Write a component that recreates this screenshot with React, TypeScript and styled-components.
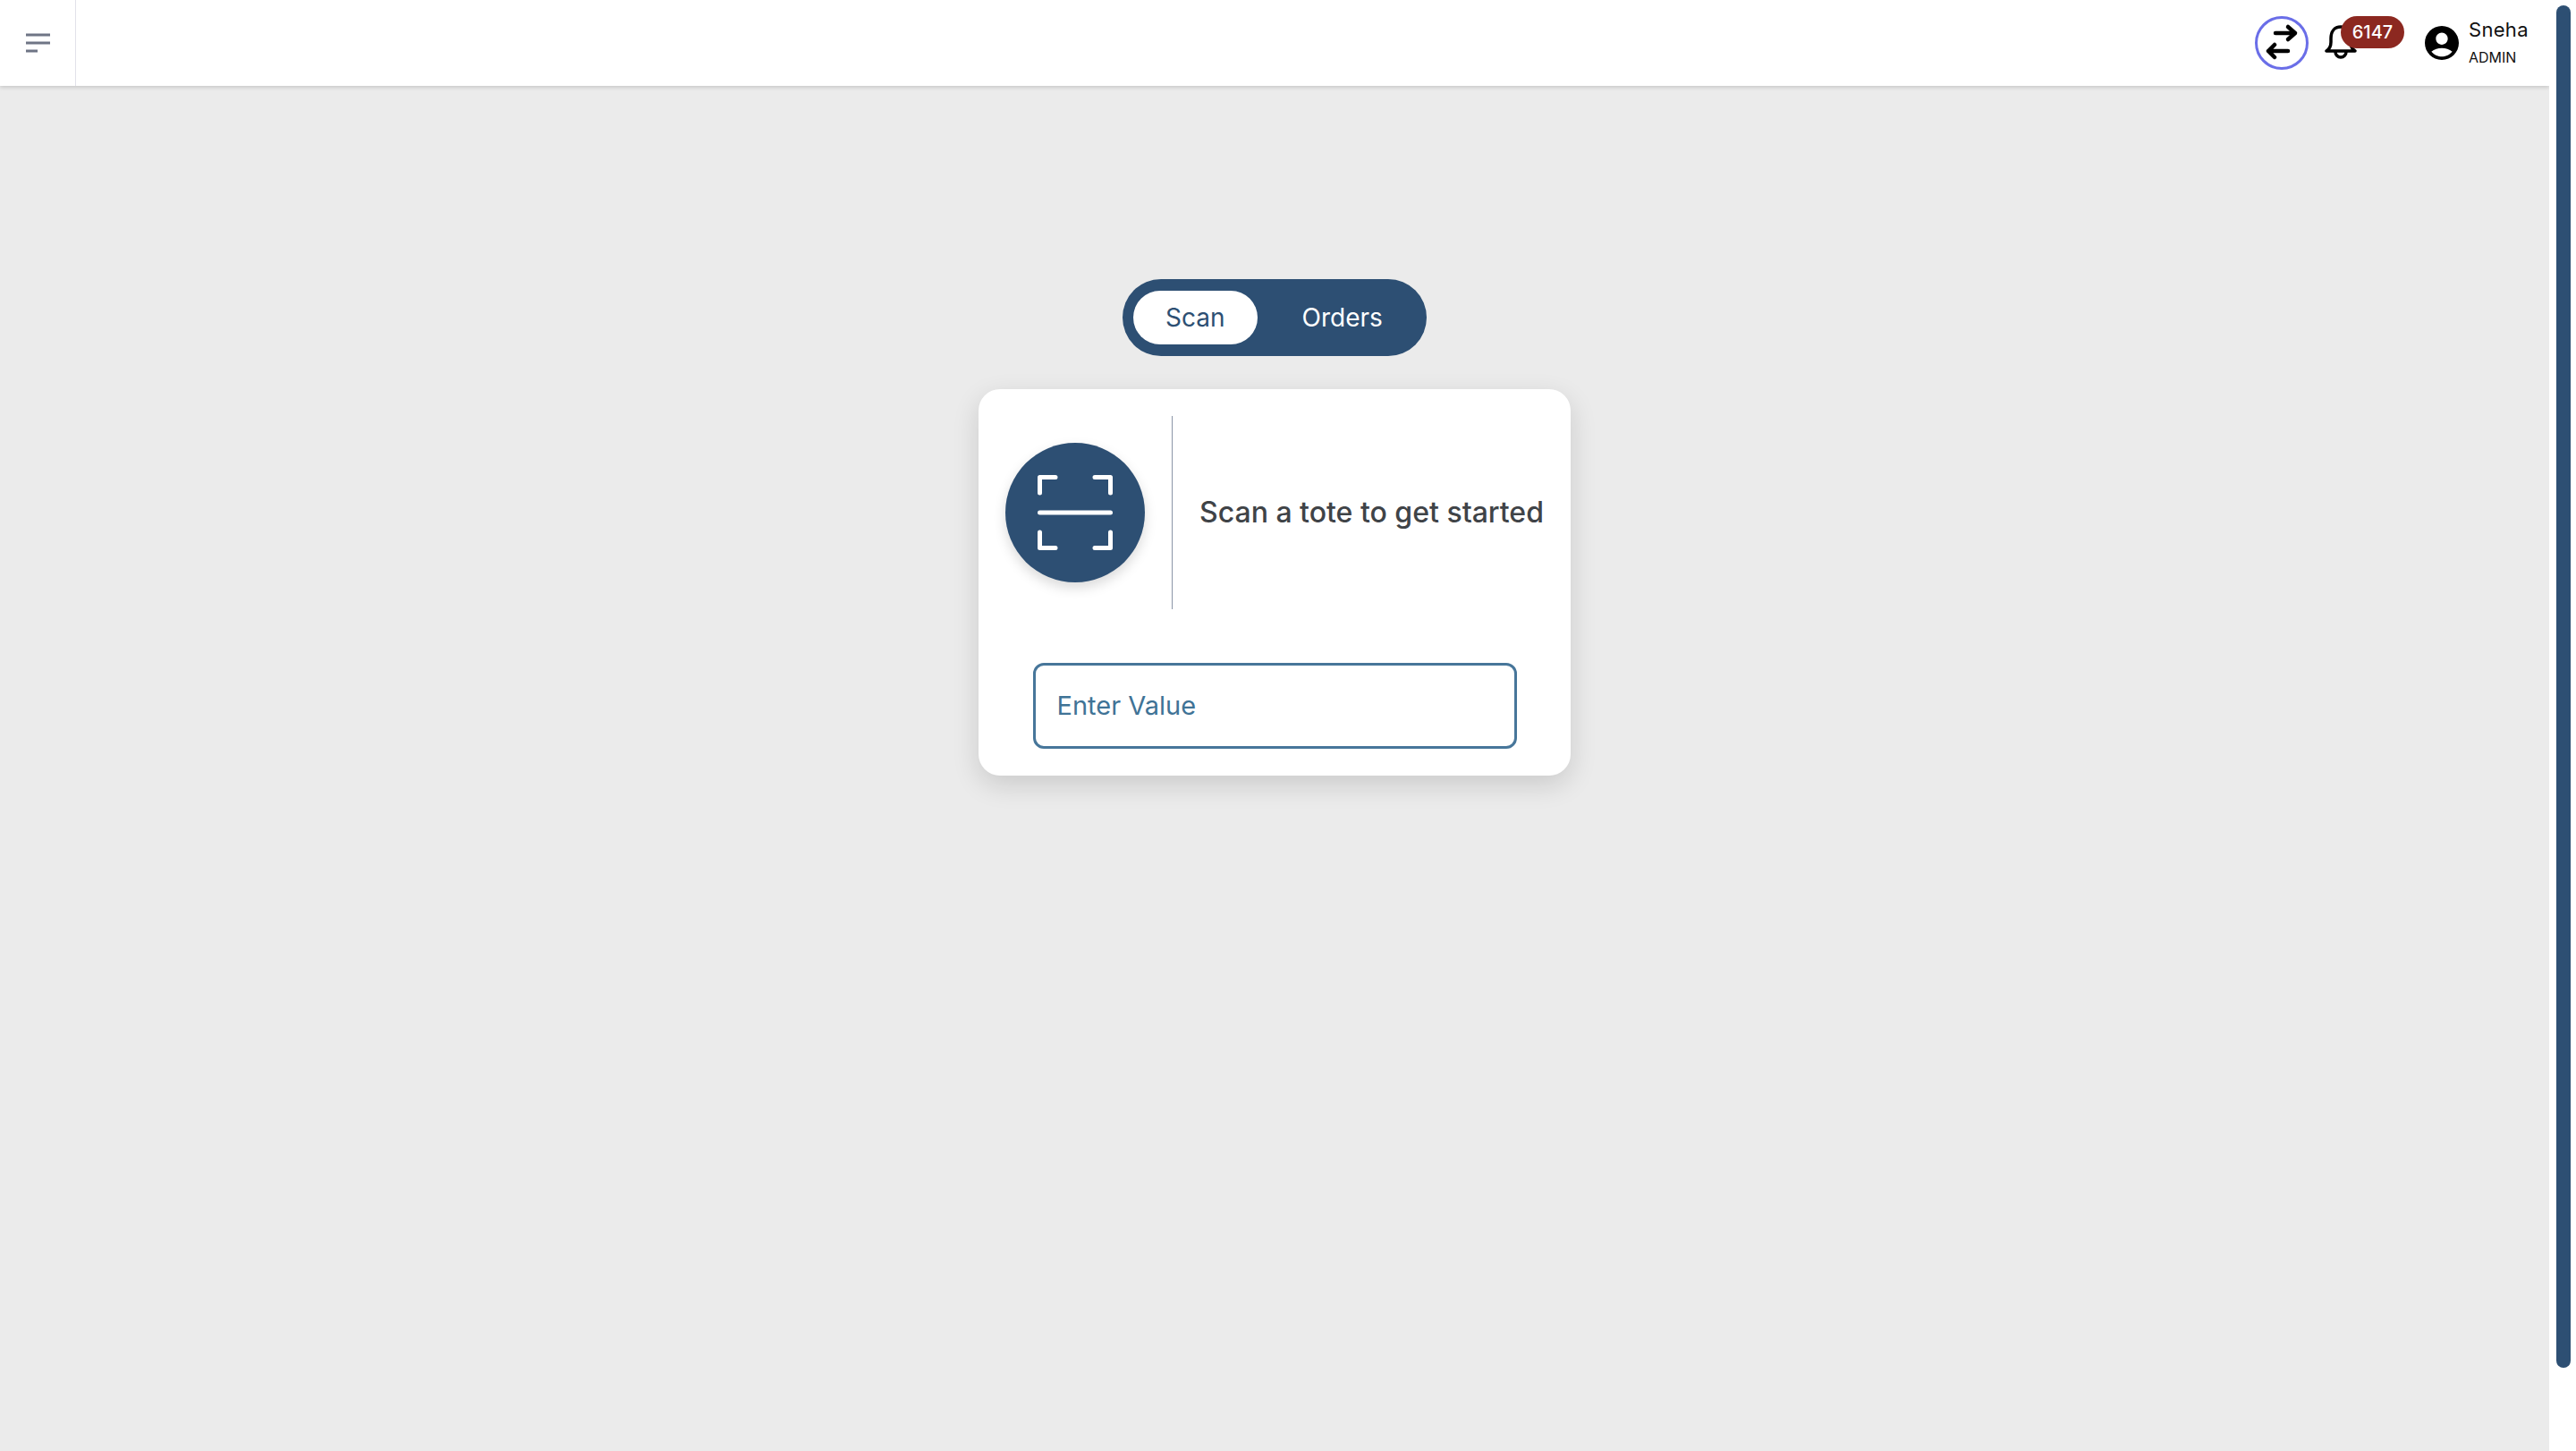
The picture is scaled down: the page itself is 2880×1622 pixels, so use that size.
import React from "react";
import styled, { createGlobalStyle } from "styled-components";

const Global = createGlobalStyle`
  html, body { margin: 0; padding: 0; background: #fff; overflow: hidden; }
  body { font-family: Inter, "Liberation Sans", sans-serif; }
`;

const Page = styled.div`
  height: 1622px;
  display: flex;
  background: #fff;
`;

const Content = styled.div`
  flex: 1;
  min-width: 0;
  background: #ebebeb;
  display: flex;
  flex-direction: column;
`;

const ScrollRail = styled.div`
  width: 30px;
  flex: none;
  box-sizing: border-box;
  padding: 6px 6px 93px 8px;
  background: #fff;
`;

const ScrollThumb = styled.div`
  height: 100%;
  border-radius: 8px;
  background: #2d4f73;
`;

const Header = styled.header`
  height: 96px;
  flex: none;
  background: #fff;
  box-shadow: 0 2px 4px rgba(0, 0, 0, 0.14);
  display: flex;
  align-items: center;
  justify-content: space-between;
`;

const MenuCell = styled.div`
  width: 85px;
  height: 96px;
  box-sizing: border-box;
  border-right: 1px solid #e2e2ea;
  display: flex;
  align-items: center;
`;

const MenuIcon = styled.svg`
  width: 30px;
  height: 24px;
  margin-left: 28px;
  color: #6f7585;
`;

const Tools = styled.div`
  display: flex;
  align-items: center;
  padding-right: 26px;
`;

const SwapButton = styled.div`
  width: 60px;
  height: 60px;
  border: 3px solid #6a6ee8;
  border-radius: 50%;
  box-sizing: border-box;
  display: flex;
  align-items: center;
  justify-content: center;
`;

const BellWrap = styled.div`
  position: relative;
  width: 89px;
  height: 60px;
  margin-left: 18px;
  margin-right: 23px;
  display: flex;
  align-items: center;
`;

const Badge = styled.span`
  position: absolute;
  left: 18px;
  top: 0;
  width: 71px;
  height: 36px;
  border-radius: 18px;
  background: #8c2820;
  color: #fff;
  font-size: 20px;
  font-weight: 500;
  line-height: 36px;
  text-align: center;
`;

const UserBlock = styled.div`
  display: flex;
  align-items: center;
  gap: 11px;
`;

const UserText = styled.div`
  width: 64px;
  display: flex;
  flex-direction: column;
  white-space: nowrap;
  margin-top: -3px;
`;

const UserName = styled.span`
  font-size: 22px;
  line-height: 30px;
  letter-spacing: 0.3px;
  color: #111;
`;

const UserRole = styled.span`
  font-size: 16px;
  line-height: 24px;
  margin-top: 4px;
  color: #111;
`;

const Main = styled.main`
  display: flex;
  flex-direction: column;
  align-items: center;
  padding-top: 216px;
`;

const Toggle = styled.div`
  display: flex;
  align-items: center;
  gap: 14px;
  height: 86px;
  padding: 0 13px 0 12px;
  box-sizing: border-box;
  border-radius: 43px;
  background: #2d4f73;
`;

const ToggleItem = styled.div<{ $active?: boolean }>`
  height: 60px;
  padding: 0 36px;
  border-radius: 30px;
  line-height: 60px;
  font-size: 28px;
  background: ${(p) => (p.$active ? "#fff" : "transparent")};
  color: ${(p) => (p.$active ? "#2d4f73" : "#fff")};
`;

const Card = styled.section`
  margin-top: 37px;
  width: 662px;
  box-sizing: border-box;
  padding: 30px;
  border-radius: 24px;
  background: #fff;
  box-shadow: 0 10px 30px rgba(0, 0, 0, 0.14);
  display: flex;
  flex-direction: column;
  align-items: center;
  gap: 60px;
`;

const CardTop = styled.div`
  display: flex;
  align-items: center;
  align-self: stretch;
  height: 216px;
`;

const Circle = styled.div`
  width: 156px;
  height: 156px;
  border-radius: 50%;
  flex: none;
  background: #2d4f73;
  box-shadow: 0 6px 14px rgba(0, 0, 0, 0.15);
  display: flex;
  align-items: center;
  justify-content: center;
`;

const Divider = styled.div`
  width: 1px;
  height: 216px;
  flex: none;
  margin: 0 30px;
  background: #8b95a7;
`;

const Prompt = styled.div`
  font-size: 32px;
  font-weight: 500;
  line-height: 36px;
  white-space: nowrap;
  color: #3f4347;
`;

const ValueInput = styled.input`
  width: 541px;
  height: 96px;
  box-sizing: border-box;
  border: 3px solid #47769a;
  border-radius: 12px;
  padding: 0 24px 2px;
  outline: none;
  font-family: inherit;
  font-size: 29px;
  background: #fff;
  &::placeholder { color: #3f7396; opacity: 1; }
`;

export default function App() {
  return (
    <Page>
      <Global />
      <Content>
        <Header>
          <MenuCell>
            <MenuIcon viewBox="0 0 30 24" fill="none" stroke="currentColor" strokeWidth="3">
              <path d="M1 3h27M1 12h27M1 21h13" />
            </MenuIcon>
          </MenuCell>
          <Tools>
            <SwapButton>
              <svg width="54" height="54" viewBox="0 0 54 54" fill="none" stroke="#000" strokeWidth="4.5" strokeLinecap="round" strokeLinejoin="round">
                <path d="M20 16h22M34 9l8 7-8 7" />
                <path d="M34 36H12M19 29l-7 7 7 7" />
              </svg>
            </SwapButton>
            <BellWrap>
              <svg width="36" height="40" viewBox="0 0 36 40" fill="none" stroke="#000" strokeWidth="3.5" strokeLinecap="round" strokeLinejoin="round">
                <path d="M2 29h32c-3-2-5-6-5-10v-4C29 7 25 2 18 2S7 7 7 15v4c0 4-2 8-5 10Z" />
                <path d="M12 30a6 6 0 0 0 12 0" />
              </svg>
              <Badge>6147</Badge>
            </BellWrap>
            <UserBlock>
              <svg width="38" height="38" viewBox="2 2 20 20" fill="#000">
                <path d="M12 2C6.48 2 2 6.48 2 12s4.48 10 10 10 10-4.48 10-10S17.52 2 12 2zm0 4c1.93 0 3.5 1.57 3.5 3.5S13.93 13 12 13s-3.5-1.57-3.5-3.5S10.07 6 12 6zm0 14c-2.03 0-4.43-.82-6.14-2.88C7.55 15.8 9.68 15 12 15s4.45.8 6.14 2.12C16.43 19.18 14.03 20 12 20z" />
              </svg>
              <UserText>
                <UserName>Sneha</UserName>
                <UserRole>ADMIN</UserRole>
              </UserText>
            </UserBlock>
          </Tools>
        </Header>
        <Main>
          <Toggle>
            <ToggleItem $active>Scan</ToggleItem>
            <ToggleItem>Orders</ToggleItem>
          </Toggle>
          <Card>
            <CardTop>
              <Circle>
                <svg width="84" height="84" viewBox="0 0 84 84" fill="none" stroke="#fff" strokeWidth="5" strokeLinecap="round" strokeLinejoin="round">
                  <path d="M2.5 20V2.5H20M64 2.5h17.5V20M2.5 64v17.5H20M64 81.5h17.5V64M2.5 42h79" />
                </svg>
              </Circle>
              <Divider />
              <Prompt>Scan a tote to get started</Prompt>
            </CardTop>
            <ValueInput placeholder="Enter Value" />
          </Card>
        </Main>
      </Content>
      <ScrollRail>
        <ScrollThumb />
      </ScrollRail>
    </Page>
  );
}
